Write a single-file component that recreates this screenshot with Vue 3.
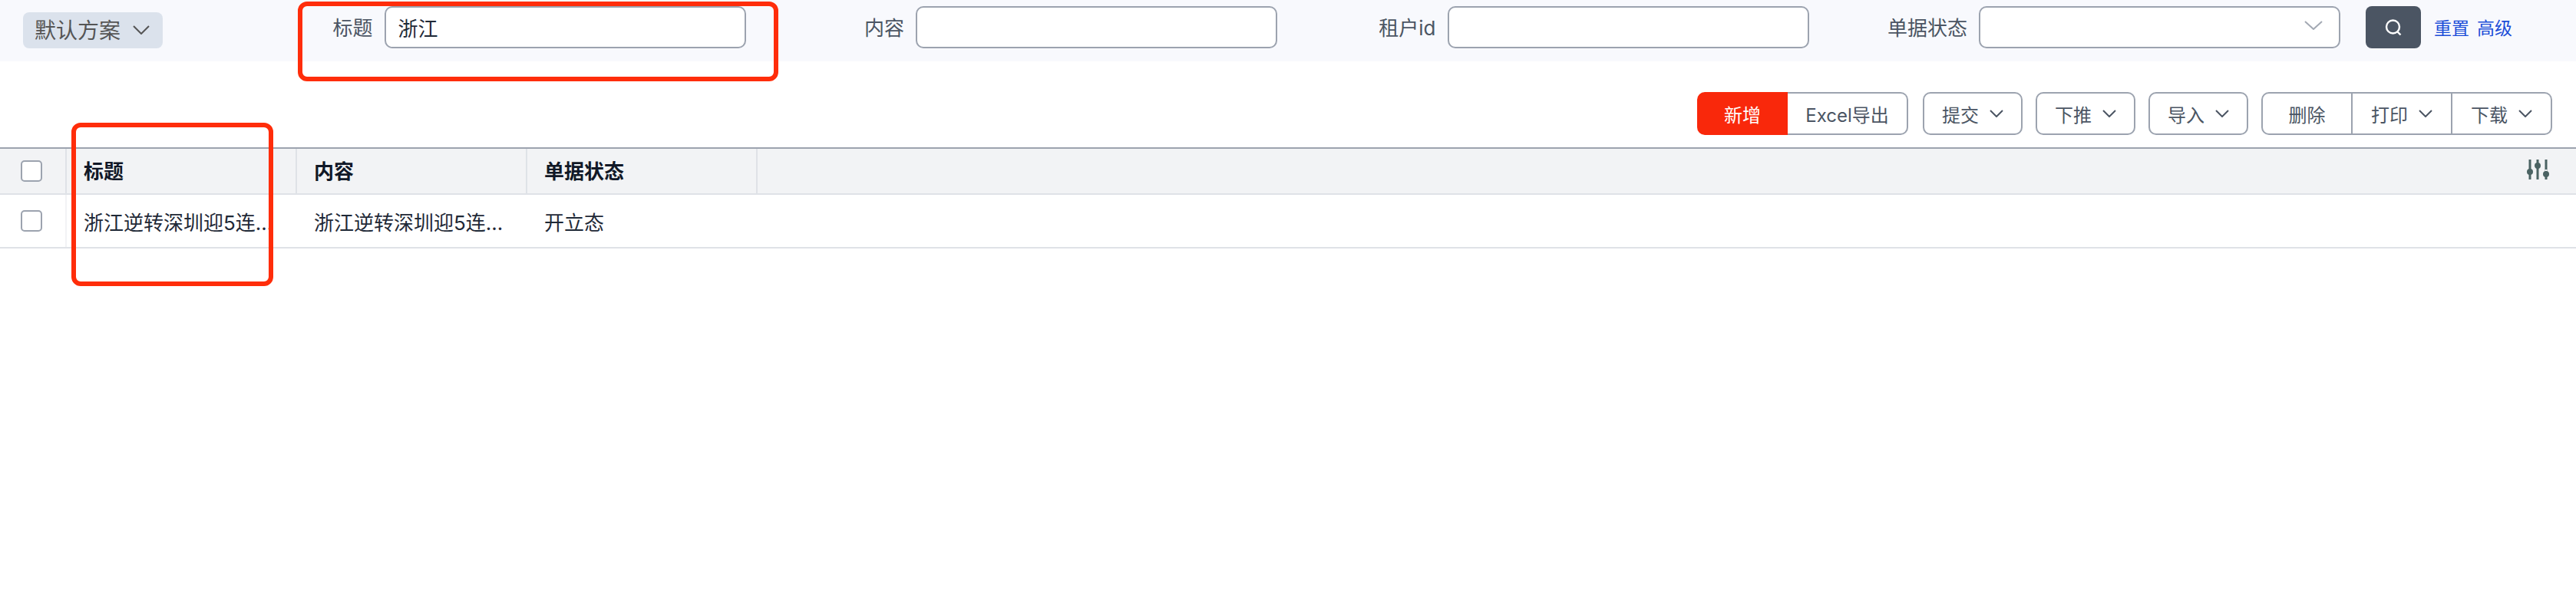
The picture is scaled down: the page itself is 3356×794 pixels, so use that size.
<template>
  <div class="page">
    <div class="search-bar">
      <div class="scheme">
        <span>默认方案</span>
        <svg class="chevron scheme-chevron" viewBox="0 0 22 12"><path d="M1 1l10 10L21 1" /></svg>
      </div>
      <div class="fields">
        <label v-for="field in fields" :key="field.label" class="field">
          <span class="field-label">{{ field.label }}</span>
          <span v-if="field.select" class="select-box">
            <svg class="chevron select-chevron" viewBox="0 0 24 12"><path d="M1 1l11 10L23 1" /></svg>
          </span>
          <input v-else class="field-input" type="text" :value="field.value" />
        </label>
      </div>
      <button class="search-btn" type="button">
        <svg viewBox="0 0 24 24" width="24" height="24">
          <circle cx="11.5" cy="11" r="8.5" />
          <path d="M17.5 17.5l4 4" />
        </svg>
      </button>
      <a class="link first-link">重置</a>
      <a class="link">高级</a>
    </div>

    <div class="toolbar">
      <div class="btn-group first-group">
        <button class="tool-btn primary new-btn" type="button">新增</button>
        <button class="tool-btn excel-btn" type="button">Excel导出</button>
      </div>
      <div class="btn-group" v-for="name in singles" :key="name">
        <button class="tool-btn menu-btn" type="button">
          {{ name }}
          <svg class="chevron tool-chevron" viewBox="0 0 18 10"><path d="M1 1l8 8 8-8" /></svg>
        </button>
      </div>
      <div class="btn-group">
        <button class="tool-btn delete-btn" type="button">删除</button>
        <button class="tool-btn menu-btn" type="button">
          打印
          <svg class="chevron tool-chevron" viewBox="0 0 18 10"><path d="M1 1l8 8 8-8" /></svg>
        </button>
        <button class="tool-btn menu-btn" type="button">
          下载
          <svg class="chevron tool-chevron" viewBox="0 0 18 10"><path d="M1 1l8 8 8-8" /></svg>
        </button>
      </div>
    </div>

    <div class="table">
      <div class="row head">
        <div class="check-cell"><span class="checkbox"></span></div>
        <div v-for="col in columns" :key="col" class="cell">{{ col }}</div>
        <div class="rest">
          <svg class="settings" viewBox="0 0 30 26" width="30" height="26">
            <path class="bar" d="M5 0v26M15 0v26M26 0v26" />
            <circle cx="5" cy="16" r="4" />
            <circle cx="15" cy="8" r="4" />
            <circle cx="26" cy="19" r="4" />
            <path class="gap" d="M26 13v2" />
          </svg>
        </div>
      </div>
      <div class="row body-row">
        <div class="check-cell"><span class="checkbox"></span></div>
        <div v-for="(text, i) in record" :key="i" class="cell">{{ text }}</div>
      </div>
    </div>

    <div class="mark mark-search"></div>
    <div class="mark mark-column"></div>
  </div>
</template>

<script setup>
const fields = [
  { label: '标题', value: '浙江' },
  { label: '内容', value: '' },
  { label: '租户id', value: '' },
  { label: '单据状态', select: true }
];
const singles = ['提交', '下推', '导入'];
const columns = ['标题', '内容', '单据状态'];
const title = '浙江逆转深圳迎5连…';
const record = [title, title, '开立态'];
</script>

<style>
html,
body {
  background: #fff;
}
</style>

<style scoped>
.page {
  position: relative;
  width: 3356px;
  height: 794px;
  overflow: hidden;
  background: #fff;
  font-family: Inter, "Noto Sans CJK SC", sans-serif;
  font-size: 26px;
  color: #1f2937;
}

.chevron path {
  fill: none;
  stroke: currentColor;
  stroke-width: 2;
}

.search-bar {
  display: flex;
  align-items: flex-start;
  box-sizing: border-box;
  height: 80px;
  padding: 8px 0 0 30px;
  background: #f8f9fd;
}

.scheme {
  display: flex;
  align-items: center;
  box-sizing: border-box;
  width: 182px;
  height: 47px;
  margin-top: 8px;
  padding: 0 0 4px 15px;
  border-radius: 8px;
  background: #dbe2ec;
  color: #555;
  font-size: 28px;
}

.scheme-chevron {
  width: 22px;
  height: 12px;
  margin-left: 16px;
  margin-top: 2px;
}

.fields {
  display: flex;
  margin-left: 67px;
}

.field {
  display: flex;
  align-items: center;
  width: 692.5px;
}

.field-label {
  width: 206.5px;
  margin-right: 15px;
  margin-top: -2px;
  text-align: right;
  color: #4b5563;
  white-space: nowrap;
}

.field-input,
.select-box {
  display: block;
  box-sizing: border-box;
  width: 471px;
  height: 55px;
  padding: 0 16px;
  border: 2px solid #9ca3af;
  border-radius: 10px;
  background: #fff;
  font: inherit;
  color: #1f2937;
  outline: none;
}

.select-box {
  display: flex;
  align-items: center;
  justify-content: flex-end;
  padding-right: 21px;
  color: #a3a9b3;
}

.select-chevron {
  width: 24px;
  height: 12px;
  margin-top: -6px;
}

.search-btn {
  display: flex;
  align-items: center;
  justify-content: center;
  width: 72px;
  height: 55px;
  margin-left: 33px;
  padding: 0;
  border: 0;
  border-radius: 8px;
  background: #4b5563;
}

.search-btn circle,
.search-btn path {
  fill: none;
  stroke: #fff;
  stroke-width: 2.4;
}

.link {
  margin-left: 10px;
  font-size: 23px;
  line-height: 58px;
  color: #1d4ed8;
}

.first-link {
  margin-left: 17px;
}

.toolbar {
  display: flex;
  justify-content: flex-end;
  gap: 17px;
  height: 56px;
  margin-top: 40px;
  padding-right: 31px;
}

.btn-group {
  display: flex;
}

.first-group {
  margin-right: 2px;
}

.tool-btn {
  display: flex;
  align-items: center;
  justify-content: center;
  box-sizing: border-box;
  height: 56px;
  padding: 0;
  border: 2px solid #9ca3af;
  border-left-width: 0;
  background: #fff;
  font: inherit;
  font-size: 24px;
  color: #4b5563;
}

.btn-group .tool-btn:first-child {
  border-left-width: 2px;
  border-radius: 10px 0 0 10px;
}

.btn-group .tool-btn:last-child {
  border-radius: 0 10px 10px 0;
}

.btn-group .tool-btn:only-child {
  border-radius: 10px;
}

.tool-btn.primary {
  border-color: #f9280b;
  background: #f9280b;
  color: #fff;
}

.new-btn {
  width: 118px;
}

.excel-btn {
  width: 157px;
}

.menu-btn {
  width: 130px;
  gap: 14px;
}

.delete-btn {
  width: 119px;
}

.tool-chevron {
  width: 18px;
  height: 10px;
  color: #4b5563;
}

.table {
  margin-top: 16px;
  border-top: 2px solid #9ca3af;
}

.row {
  display: flex;
  box-sizing: border-box;
  border-bottom: 2px solid #dfe2e7;
}

.head {
  height: 60px;
  background: #f2f3f5;
  font-weight: 600;
  color: #111827;
}

.body-row {
  height: 70px;
}

.check-cell {
  display: flex;
  align-items: center;
  box-sizing: border-box;
  flex: 0 0 87px;
  padding-left: 27px;
  border-right: 2px solid #f2f3f5;
}

.head .check-cell,
.head .cell {
  border-right: 2px solid #dfe2e7;
}

.checkbox {
  box-sizing: border-box;
  width: 28px;
  height: 28px;
  border: 2px solid #9ca3af;
  border-radius: 5px;
  background: #fff;
}

.cell {
  box-sizing: border-box;
  flex: 0 0 300px;
  padding: 0 22px;
  white-space: nowrap;
  line-height: 60px;
}

.body-row .cell {
  line-height: 74px;
}

.rest {
  display: flex;
  flex: 1;
  align-items: center;
  justify-content: flex-end;
  padding: 0 35px 4px 0;
}

.settings .bar {
  fill: none;
  stroke: #4b6363;
  stroke-width: 3;
}

.settings circle {
  fill: #4b6363;
}

.settings .gap {
  fill: none;
  stroke: #f2f3f5;
  stroke-width: 3;
}

.mark {
  position: absolute;
  box-sizing: border-box;
  border: 6px solid #ff2d0a;
  border-radius: 12px;
  pointer-events: none;
}

.mark-search {
  left: 388px;
  top: 2px;
  width: 626px;
  height: 104px;
}

.mark-column {
  left: 93px;
  top: 160px;
  width: 263px;
  height: 213px;
}
</style>
